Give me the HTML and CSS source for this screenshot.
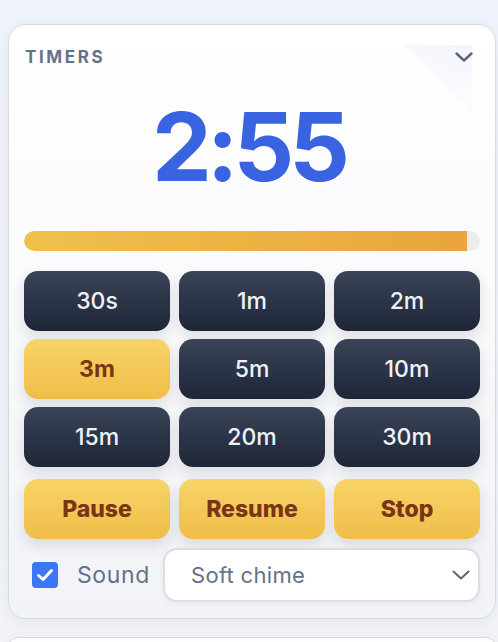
FILE: index.html
```
<!DOCTYPE html>
<html lang="en">
<head>
<meta charset="utf-8">
<title>Timers</title>
<link rel="stylesheet" href="styles.css">
</head>
<body>
<section class="card">
  <div class="deco"></div>
  <header class="card-head">
    <h2 class="title">TIMERS</h2>
    <button class="collapse" aria-label="Collapse">
      <svg width="18" height="10" viewBox="0 0 18 10"><path d="M1.5 1.5 L9 8.5 L16.5 1.5" fill="none" stroke="#5b6479" stroke-width="2.4" stroke-linecap="round" stroke-linejoin="round"/></svg>
    </button>
  </header>
  <div class="time">2:55</div>
  <div class="progress"><div class="fill" style="width:97.2%"></div></div>
  <div class="presets">
    <button class="btn dark">30s</button>
    <button class="btn dark">1m</button>
    <button class="btn dark">2m</button>
    <button class="btn gold">3m</button>
    <button class="btn dark">5m</button>
    <button class="btn dark">10m</button>
    <button class="btn dark">15m</button>
    <button class="btn dark">20m</button>
    <button class="btn dark">30m</button>
  </div>
  <div class="actions">
    <button class="btn gold bold">Pause</button>
    <button class="btn gold bold">Resume</button>
    <button class="btn gold bold">Stop</button>
  </div>
  <div class="sound-row">
    <label class="sound">
      <span class="check"><svg width="18" height="14" viewBox="0 0 18 14"><path d="M2.5 7.5 L7 11.5 L15.5 2.5" fill="none" stroke="#fff" stroke-width="3" stroke-linecap="round" stroke-linejoin="round"/></svg></span>
      <span class="sound-label">Sound</span>
    </label>
    <div class="select">
      <span class="select-text">Soft chime</span>
      <svg width="18" height="10" viewBox="0 0 18 10"><path d="M1.5 1.5 L9 8.5 L16.5 1.5" fill="none" stroke="#5b6479" stroke-width="2" stroke-linecap="round" stroke-linejoin="round"/></svg>
    </div>
  </div>
</section>
<section class="card next"></section>
</body>
</html>
```
FILE: styles.css
```
* { box-sizing: border-box; }
html, body { margin: 0; padding: 0; }
html { height: 642px; overflow: hidden; }
body {
  background: linear-gradient(180deg, #eef2fa 0%, #f1f3f8 100%);
  font-family: "Inter", "Liberation Sans", sans-serif;
  padding: 24px 2px 0 8px;
  height: 642px;
  overflow: hidden;
}
.card {
  position: relative;
  width: 488px;
  border: 1px solid #d6d9e0;
  border-radius: 18px;
  background: linear-gradient(180deg, #ffffff 0%, #fbfbfd 40%, #f2f3f6 100%);
  padding: 16px 15px 16px 15px;
  box-shadow: 0 4px 14px rgba(40, 50, 80, 0.06);
}
.card.next {
  margin-top: 18px;
  height: 20px;
  padding: 0;
}
.deco {
  position: absolute;
  top: 20px;
  right: 23px;
  width: 68px;
  height: 67px;
  clip-path: polygon(0 0, 100% 0, 100% 100%);
  background: linear-gradient(200deg, #f3f5fc 0%, #f9fafd 50%, #fefefb 100%);
}
.card-head {
  position: relative;
  display: flex;
  justify-content: space-between;
  align-items: center;
  height: 32px;
}
.title {
  margin: 0;
  font-size: 17px;
  font-weight: 700;
  letter-spacing: 2.6px;
  color: #667189;
  padding-left: 1px;
}
.collapse {
  background: none;
  border: 0;
  padding: 0;
  margin-right: 7px;
  margin-top: -1px;
  display: flex;
}
.time {
  margin-top: 26px;
  text-align: center;
  font-size: 95px;
  line-height: 96px;
  font-weight: 700;
  color: #3a63e2;
  letter-spacing: -5px;
  padding-right: 7px;
}
.progress {
  margin-top: 36px;
  height: 20px;
  border-radius: 10px;
  background: #ececee;
  overflow: hidden;
}
.fill {
  height: 100%;
  border-radius: 10px 0 0 10px;
  background: linear-gradient(90deg, #f0c04b 0%, #e9a53b 100%);
}
.presets, .actions {
  display: grid;
  grid-template-columns: repeat(3, 1fr);
  gap: 8px 9px;
}
.presets { margin-top: 20px; }
.actions { margin-top: 12px; }
.btn {
  height: 60px;
  border: 0;
  border-radius: 14px;
  font-family: "Inter", "Liberation Sans", sans-serif;
  font-size: 23px;
  font-weight: 500;
  padding: 0;
  box-shadow: 0 6px 14px rgba(30, 40, 60, 0.13);
}
.btn.dark {
  background: linear-gradient(180deg, #3a4458 0%, #1e2537 100%);
  color: #eef1f8;
}
.btn.gold {
  background: linear-gradient(180deg, #f7d468 0%, #f0bd48 100%);
  color: #7a3517;
  font-weight: 700;
}
.btn.bold { font-weight: 800; }
.sound-row {
  margin-top: 9px;
  display: flex;
  align-items: center;
}
.sound {
  display: flex;
  align-items: center;
  padding-left: 8px;
  width: 139px;
}
.check {
  width: 26px;
  height: 26px;
  border-radius: 4px;
  background: #3b77f5;
  display: flex;
  align-items: center;
  justify-content: center;
}
.sound-label {
  margin-left: 19px;
  font-size: 23px;
  letter-spacing: 0.6px;
  color: #65718a;
}
.select {
  flex: 1;
  height: 54px;
  border: 2px solid #dadde3;
  border-radius: 14px;
  background: #fff;
  display: flex;
  align-items: center;
  justify-content: space-between;
  padding: 0 8px 0 26px;
  box-shadow: 0 2px 6px rgba(30, 40, 60, 0.05);
}
.select-text {
  font-size: 22px;
  letter-spacing: 0.3px;
  color: #65718a;
}
```
